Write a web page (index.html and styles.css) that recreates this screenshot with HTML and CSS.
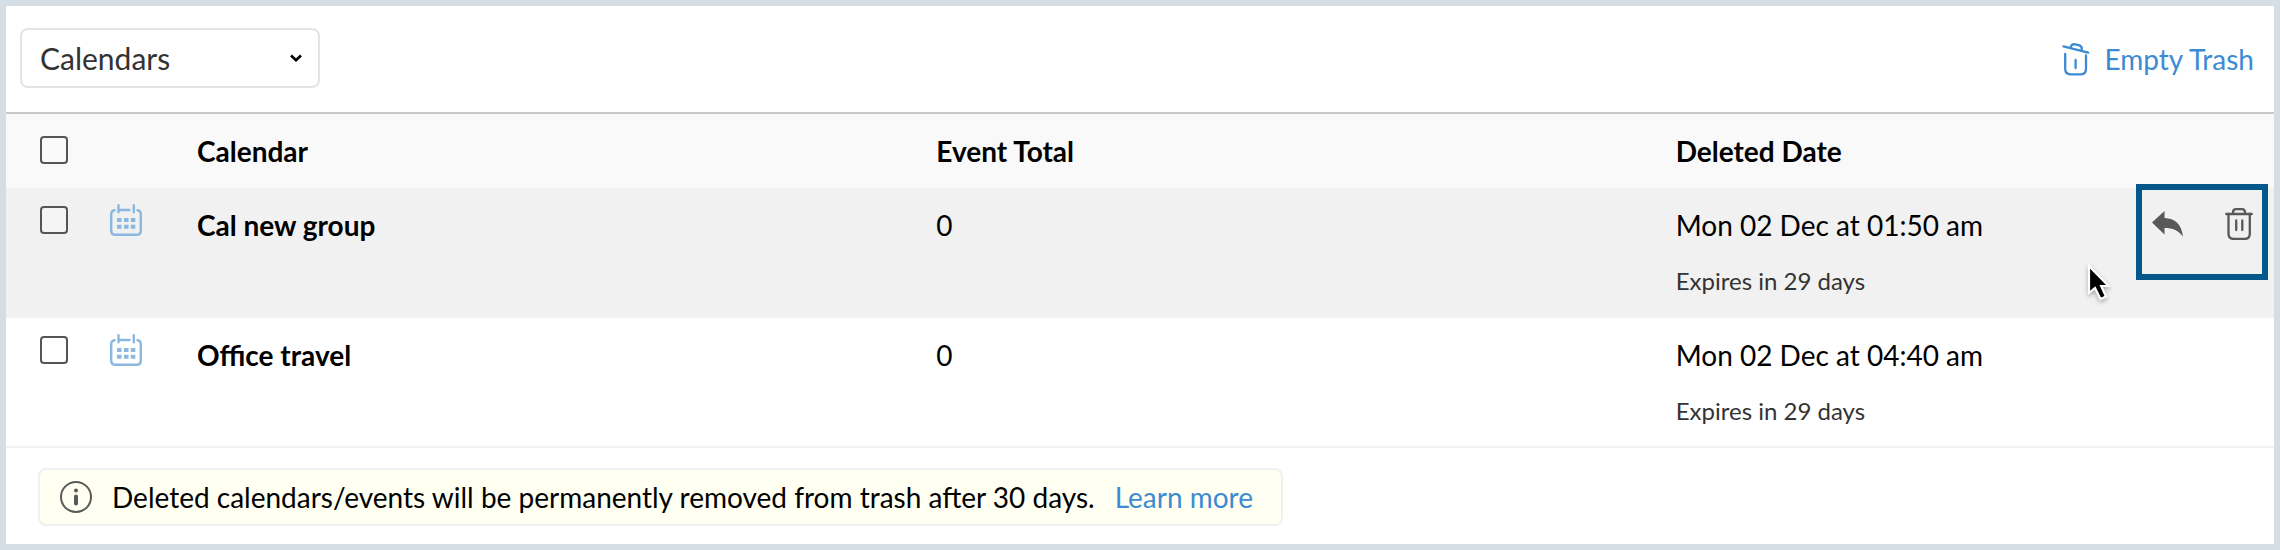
FILE: index.html
```
<!DOCTYPE html>
<html lang="en">
<head>
<meta charset="utf-8">
<title>Trash</title>
<link rel="stylesheet" href="styles.css">
</head>
<body>
<svg class="sprite" aria-hidden="true">
  <symbol id="calendar" viewBox="0 0 32 32">
    <g fill="none" stroke="#8ab8e0" stroke-width="2.4" stroke-linecap="round" stroke-linejoin="round">
      <path d="M4.500 6.200Q1.200 6.800 1.200 10V26.500Q1.200 30.800 5.500 30.800H26.500Q30.800 30.800 30.800 26.500V10Q30.800 6.800 27.500 6.200"/>
      <path d="M8.500 1.200V8.300M23.800 1.200V8.300M8.500 6H19.500"/>
    </g>
    <path fill="#8ab8e0" d="M7 14h4.500v4H7zM14 14h4.500v4H14zM20.800 14h4.500v4h-4.500zM7 20.800h4.500v4H7zM14 20.800h4.500v4H14zM20.800 20.800h4.500v4h-4.500z"/>
  </symbol>
</svg>
<main class="panel">
  <header class="toolbar">
    <div class="picker">
      <select class="picker-select" aria-label="Trash type">
        <option>Calendars</option>
        <option>Events</option>
      </select>
      <svg class="picker-arrow" viewBox="0 0 14 10" aria-hidden="true"><path d="M2 2.500L7 7.200L12 2.500" fill="none" stroke="#000" stroke-width="2.600"/></svg>
    </div>
    <button class="empty" type="button">
      <svg class="empty-icon" viewBox="0 0 28 34" aria-hidden="true">
        <g fill="none" stroke="#3c8bd2" stroke-width="2.300" stroke-linecap="round" stroke-linejoin="round">
          <path d="M1.500 4.400L26.200 10.600"/>
          <path d="M8.400 5.800L9.500 3.500Q10.200 2 12 2.100L16.500 3.100Q19.500 3.900 19.800 6L19.400 8.600"/>
          <path d="M3.200 12V26.500Q3.200 32.300 8.500 32.300H19Q24 32.300 24 26.500V13.500M13.600 18V26"/>
        </g>
      </svg>
      <span>Empty Trash</span>
    </button>
  </header>

  <table class="items">
    <colgroup>
      <col class="col-check"><col class="col-icon"><col class="col-wide"><col class="col-wide"><col>
    </colgroup>
    <thead>
      <tr>
        <th class="check"><input class="box head-box" type="checkbox" aria-label="Select all"></th>
        <td></td>
        <th scope="col">Calendar</th>
        <th scope="col">Event Total</th>
        <th scope="col">Deleted Date</th>
      </tr>
    </thead>
    <tbody>
      <tr class="hovered">
        <td class="check"><input class="box" type="checkbox" aria-label="Select Cal new group"></td>
        <td class="icon-cell"><svg class="calendar-icon" aria-hidden="true"><use href="#calendar"/></svg></td>
        <th scope="row">Cal new group</th>
        <td>0</td>
        <td class="date-cell">
          <div>Mon 02 Dec at 01:50 am</div>
          <div class="expires">Expires in 29 days</div>
          <div class="actions">
            <button class="action" type="button" aria-label="Restore">
              <svg class="reply-icon" viewBox="0 0 32 28" aria-hidden="true"><path fill="#595959" d="M0 12.500L12.500 1V8C23 8.500 29.500 14 31 26.500C26.500 20.500 21 18 12.500 18V24.500Z"/></svg>
            </button>
            <button class="action" type="button" aria-label="Delete permanently">
              <svg class="bin-icon" viewBox="0 0 28 32" aria-hidden="true">
                <g fill="none" stroke="#595959" stroke-width="2.300" stroke-linecap="round" stroke-linejoin="round">
                  <path d="M1.200 6H26.800M8 6V4.500Q8 1.200 11.300 1.200H16.700Q20 1.200 20 4.500V6"/>
                  <path d="M3.500 6V25.500Q3.500 31 9 31H19.500Q24.800 31 24.800 25.500V6M11.200 12.500V22M17.300 12.500V22"/>
                </g>
              </svg>
            </button>
          </div>
          <svg class="pointer" viewBox="0 0 26 38" aria-hidden="true"><path d="M3 2V29L9 24L14.500 35L20 32.500L15.200 22H22.500Z" fill="#000" stroke="#fff" stroke-width="2.200"/></svg>
        </td>
      </tr>
      <tr class="last">
        <td class="check"><input class="box" type="checkbox" aria-label="Select Office travel"></td>
        <td class="icon-cell"><svg class="calendar-icon" aria-hidden="true"><use href="#calendar"/></svg></td>
        <th scope="row">Office travel</th>
        <td>0</td>
        <td class="date-cell">
          <div>Mon 02 Dec at 04:40 am</div>
          <div class="expires">Expires in 29 days</div>
        </td>
      </tr>
    </tbody>
  </table>

  <p class="notice">
    <svg class="info-icon" viewBox="0 0 32 32" aria-hidden="true">
      <circle cx="16" cy="16" r="15" fill="none" stroke="#595959" stroke-width="2"/>
      <circle cx="16" cy="9.500" r="2" fill="#595959"/>
      <rect x="14" y="13.500" width="4" height="11" rx="2" fill="#595959"/>
    </svg>
    <span>Deleted calendars/events will be permanently removed from trash after 30 days.</span>
    <a class="learn" href="#">Learn more</a>
  </p>
</main>
</body>
</html>
```

FILE: styles.css
```
* {
  box-sizing: border-box;
}

body {
  margin: 0;
  background: #fff;
  color: #000;
  font: 28px/34px Lato, sans-serif;
}

.sprite {
  position: absolute;
  width: 0;
  height: 0;
}

.panel {
  min-height: 100vh;
  border: 6px solid #d6dee5;
}

.toolbar {
  display: flex;
  align-items: flex-start;
  justify-content: space-between;
  padding: 22px 20px 22px 14px;
  border-bottom: 2px solid #c8c8c8;
}

.picker {
  display: grid;
  align-items: center;
  width: 300px;
}

.picker-select {
  grid-area: 1 / 1;
  height: 60px;
  padding: 0 18px;
  border: 2px solid #e4e4e4;
  border-radius: 8px;
  background: #fff;
  color: #333;
  font: inherit;
  font-size: 30px;
  appearance: none;
}

.picker-arrow {
  grid-area: 1 / 1;
  justify-self: end;
  width: 14px;
  height: 10px;
  margin-right: 17px;
  pointer-events: none;
}

.empty {
  display: flex;
  align-items: center;
  gap: 14px;
  height: 62px;
  padding: 0;
  border: 0;
  background: none;
  color: #3c8bd2;
  font: inherit;
}

.empty-icon {
  width: 28px;
  height: 34px;
}

.items {
  width: 100%;
  table-layout: fixed;
  border-collapse: collapse;
}

.col-check {
  width: 104px;
}

.col-icon {
  width: 87px;
}

.col-wide {
  width: 32.6%;
}

.items th,
.items td {
  padding: 20px 0;
  text-align: left;
  vertical-align: top;
}

.items thead {
  background: #f9f9f9;
}

.items .check {
  padding: 18px 0 0 34px;
}

.items thead .check {
  padding-top: 22px;
}

.items .icon-cell {
  padding-top: 16px;
}

.items .date-cell {
  position: relative;
  padding-bottom: 22px;
}

.hovered {
  background: #f1f1f1;
}

.last {
  box-shadow: inset 0 -2px #f1f1f1;
}

.box {
  display: block;
  width: 28px;
  height: 28px;
  margin: 0;
  border: 2px solid #555;
  border-radius: 4px;
  background: #fff;
  appearance: none;
}

.head-box {
  background: #fafafa;
}

.hovered .box {
  background: #f5f5f5;
}

.calendar-icon {
  display: block;
  width: 32px;
  height: 32px;
}

.expires {
  margin-top: 24px;
  color: #333;
  font-size: 24px;
  line-height: 30px;
}

.actions {
  position: absolute;
  top: -4px;
  right: 6px;
  display: flex;
  align-items: flex-start;
  justify-content: space-between;
  width: 132px;
  height: 96px;
  padding: 18px 9px 0 10px;
  border: 6px solid #04578b;
}

.action {
  padding: 0;
  border: 0;
  background: none;
}

.reply-icon,
.bin-icon {
  display: block;
  height: 32px;
}

.reply-icon {
  width: 32px;
}

.bin-icon {
  width: 28px;
}

.pointer {
  position: absolute;
  right: 162px;
  top: 76px;
  width: 26px;
  height: 38px;
  filter: drop-shadow(0 2px 2px rgba(0, 0, 0, 0.3));
}

.notice {
  display: flex;
  align-items: center;
  width: fit-content;
  margin: 20px 32px 18px;
  padding: 10px 28px 10px 20px;
  border: 2px solid #f0f0f0;
  border-radius: 8px;
  background: #fffff2;
}

.info-icon {
  width: 32px;
  height: 32px;
  margin-right: 20px;
}

.learn {
  margin-left: 20px;
  color: #3c8bd2;
  text-decoration: none;
}
```
